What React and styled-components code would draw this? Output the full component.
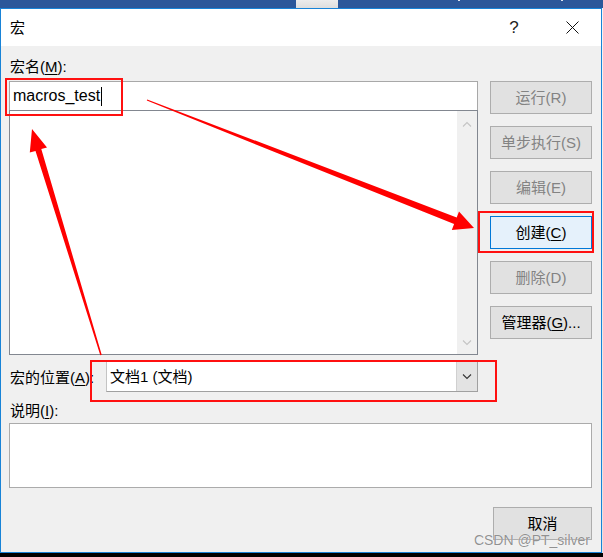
import styled, { createGlobalStyle } from "styled-components"

const GlobalStyle = createGlobalStyle`
  html, body {
    margin: 0;
    padding: 0;
    background: #000;
  }
  body {
    font-family: "Liberation Sans", "Noto Sans CJK SC", sans-serif;
    color: #000;
  }
  u {
    text-decoration-thickness: 1px;
    text-underline-offset: 2px;
  }
`

const acoes = [
    { nome: '运行', tecla: 'R', desativado: true },
    { nome: '单步执行', tecla: 'S', desativado: true },
    { nome: '编辑', tecla: 'E', desativado: true },
    { nome: '创建', tecla: 'C', ativo: true },
    { nome: '删除', tecla: 'D', desativado: true },
    { nome: '管理器', tecla: 'G', sufixo: '...' },
]

function Chevron({ up, color }) {
    return (
        <svg width="10" height="6" viewBox="0 0 10 6">
            <polyline
                points={up ? "1,5.5 5,1.5 9,5.5" : "1,0.5 5,4.5 9,0.5"}
                fill="none"
                stroke={color}
                strokeWidth="1.1"
            />
        </svg>
    )
}

export default function App() {
    return (
        <Tela>
            <GlobalStyle />
            <BarraTarefas>
                <Aba />
                <Marca $left={120} />
                <Marca $left={101} />
            </BarraTarefas>
            <Meio>
                <Janela>
                    <BarraTitulo>
                        <Titulo>宏</Titulo>
                        <BotoesTitulo>
                            <BotaoLegenda>?</BotaoLegenda>
                            <BotaoLegenda>
                                <svg width="13" height="13" viewBox="0 0 13 13">
                                    <path d="M0.5 0.5 L12.5 12.5 M12.5 0.5 L0.5 12.5" stroke="#111" strokeWidth="1" />
                                </svg>
                            </BotaoLegenda>
                        </BotoesTitulo>
                    </BarraTitulo>
                    <Corpo>
                        <Rotulo $altura={35}>宏名(<u>M</u>):</Rotulo>
                        <Grade>
                            <Coluna>
                                <CampoNome>
                                    macros_test<Cursor />
                                </CampoNome>
                                <Lista>
                                    <Rolagem>
                                        <Chevron up color="#c4c4c4" />
                                        <Chevron color="#c4c4c4" />
                                    </Rolagem>
                                </Lista>
                            </Coluna>
                            <ColunaBotoes>
                                {acoes.map((item) => (
                                    <Botao key={item.tecla} $desativado={item.desativado} $ativo={item.ativo}>
                                        {item.nome}(
                                        {item.desativado ? item.tecla : <u>{item.tecla}</u>}
                                        ){item.sufixo}
                                    </Botao>
                                ))}
                            </ColunaBotoes>
                        </Grade>
                        <LinhaLocal>
                            <RotuloLinha>宏的位置(<u>A</u>):</RotuloLinha>
                            <Combo>
                                <TextoCombo>文档1 (文档)</TextoCombo>
                                <BotaoCombo>
                                    <Chevron color="#333" />
                                </BotaoCombo>
                            </Combo>
                        </LinhaLocal>
                        <Rotulo $altura={31}>说明(<u>I</u>):</Rotulo>
                        <Descricao />
                        <Rodape>
                            <Botao $largura={99}>取消</Botao>
                        </Rodape>
                    </Corpo>
                </Janela>
                <Lateral />
            </Meio>
            <Anotacoes width="603" height="557" viewBox="0 0 603 557">
                <rect x="6" y="79" width="116" height="36" />
                <rect x="479" y="212" width="114" height="40" />
                <rect x="91" y="361" width="405" height="40" />
                <polygon points="147.2,99.4 456.7,217.4 459,211.4 474,228 451.8,230 454.1,224 146.8,100.6" />
                <polygon points="101.7,354.8 41.3,149.1 47,147.4 32,129 29.8,152.6 35.5,150.9 100.3,355.2" />
            </Anotacoes>
            <MarcaDagua>CSDN @PT_silver</MarcaDagua>
        </Tela>
    )
}

const Tela = styled.div`
    position: relative;
    width: 603px;
    height: 557px;
    overflow: hidden;
    background: #000;
`

const BarraTarefas = styled.div`
    display: flex;
    height: 8px;
    background: #2b579a;
`

const Aba = styled.div`
    margin-left: 296px;
    width: 42px;
    height: 8px;
    background: linear-gradient(#ececec, #dedede);
`

const Marca = styled.div`
    margin-left: ${props => props.$left}px;
    width: 2px;
    height: 1px;
    background: #dfe6f0;
`

const Meio = styled.div`
    display: flex;
`

const Lateral = styled.div`
    width: 1px;
    height: 545px;
    background: linear-gradient(#f4f4f4, #e2e2e2);
`

const Janela = styled.div`
    width: 602px;
    height: 545px;
    box-sizing: border-box;
    border: 1px solid #1883d7;
    background: #f0f0f0;
    display: flex;
    flex-direction: column;
`

const BarraTitulo = styled.div`
    height: 37px;
    background: #fff;
    display: flex;
    align-items: center;
    justify-content: space-between;
    padding-left: 9px;
`

const Titulo = styled.span`
    font-size: 15px;
    line-height: 20px;
    margin-top: 1px;
`

const BotoesTitulo = styled.div`
    display: flex;
    height: 100%;
`

const BotaoLegenda = styled.div`
    width: 58px;
    display: flex;
    align-items: center;
    justify-content: center;
    font-size: 17px;
    color: #222;
`

const Corpo = styled.div`
    flex: 1;
    padding: 0 9px 0 8px;
    display: flex;
    flex-direction: column;
`

const Rotulo = styled.div`
    height: ${props => props.$altura}px;
    box-sizing: border-box;
    display: flex;
    align-items: flex-end;
    padding-bottom: ${props => props.$altura > 32 ? 4 : 2}px;
    padding-left: 1px;
    font-size: 15px;
    line-height: 20px;
`

const Grade = styled.div`
    display: grid;
    grid-template-columns: 469px 102px;
    column-gap: 12px;
`

const Coluna = styled.div`
    display: flex;
    flex-direction: column;
`

const CampoNome = styled.div`
    height: 30px;
    box-sizing: border-box;
    border: 1px solid #a8a8a8;
    background: #fff;
    display: flex;
    align-items: center;
    padding-left: 3px;
    font-size: 16px;
`

const Cursor = styled.span`
    display: inline-block;
    width: 1px;
    height: 19px;
    margin-left: 1px;
    background: #000;
`

const Lista = styled.div`
    margin-top: -1px;
    height: 245px;
    box-sizing: border-box;
    border: 1px solid #828790;
    background: #fff;
    display: flex;
    justify-content: flex-end;
`

const Rolagem = styled.div`
    width: 20px;
    background: #f0f0f0;
    display: flex;
    flex-direction: column;
    justify-content: space-between;
    align-items: center;
    padding: 10px 0 8px;
`

const ColunaBotoes = styled.div`
    display: flex;
    flex-direction: column;
    gap: 12px;
`

const Botao = styled.div`
    width: ${props => props.$largura ? props.$largura + 'px' : 'auto'};
    height: 33px;
    box-sizing: border-box;
    border: 1px solid ${props => props.$ativo ? '#0078d7' : '#adadad'};
    background: ${props => props.$ativo ? '#e5f1fb' : '#e1e1e1'};
    color: ${props => props.$desativado ? '#838383' : '#000'};
    display: flex;
    align-items: center;
    justify-content: center;
    font-size: 15px;
    line-height: 20px;
    white-space: pre;
`

const LinhaLocal = styled.div`
    margin-top: 6px;
    height: 31px;
    display: grid;
    grid-template-columns: 97px 372px;
    align-items: center;
`

const RotuloLinha = styled.div`
    font-size: 15px;
    line-height: 20px;
    padding-left: 1px;
    margin-top: 2px;
`

const Combo = styled.div`
    height: 31px;
    box-sizing: border-box;
    border: 1px solid #c4c4c4;
    border-bottom-color: #a0a0a0;
    border-right-color: #a0a0a0;
    background: #fff;
    display: flex;
`

const TextoCombo = styled.div`
    flex: 1;
    display: flex;
    align-items: center;
    padding-left: 3px;
    font-size: 15px;
    line-height: 20px;
`

const BotaoCombo = styled.div`
    width: 20px;
    background: #e3e3e3;
    border-left: 1px solid #d0d0d0;
    display: flex;
    align-items: center;
    justify-content: center;
`

const Descricao = styled.div`
    height: 65px;
    box-sizing: border-box;
    border: 1px solid #ababab;
    background: #fff;
`

const Rodape = styled.div`
    margin-top: 19px;
    display: flex;
    justify-content: flex-end;
`

const Anotacoes = styled.svg`
    position: absolute;
    left: 0;
    top: 0;
    pointer-events: none;
    > rect {
        fill: none;
        stroke: #ff1010;
        stroke-width: 2;
    }
    > polygon {
        fill: #ff0000;
        stroke: none;
    }
`

const MarcaDagua = styled.div`
    position: absolute;
    right: 13px;
    top: 531px;
    font-family: "Liberation Sans", sans-serif;
    font-size: 14px;
    line-height: 18px;
    color: rgba(110, 110, 110, 0.75);
    text-shadow: 0 0 1px #fff;
`
